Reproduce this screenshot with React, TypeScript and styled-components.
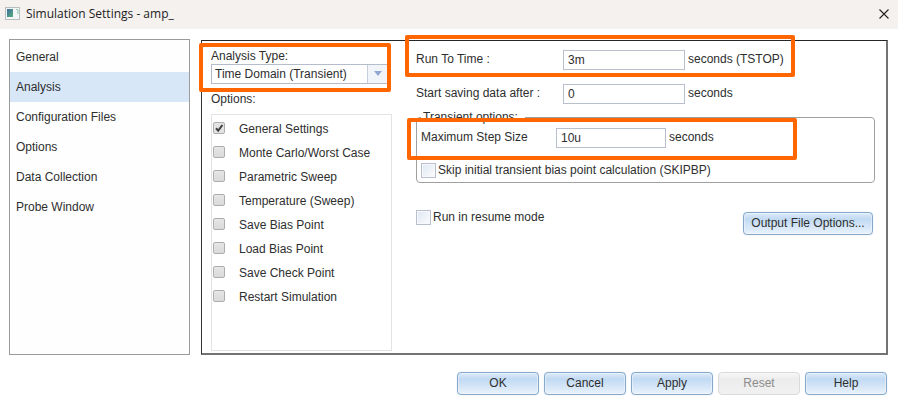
import React, { useState } from "react";
import styled, { createGlobalStyle, css } from "styled-components";

const GlobalStyle = createGlobalStyle`
  * { box-sizing: border-box; }
  body {
    margin: 0;
    background: #fff;
    color: #2e2e2e;
    font: 12px/16px "Liberation Sans", Arial, sans-serif;
  }
  button, input, select { font: inherit; color: inherit; margin: 0; }
`;

const Window = styled.div`
  display: flex;
  flex-direction: column;
  min-height: 100vh;
`;

const TitleBar = styled.header`
  display: flex;
  align-items: center;
  gap: 6px;
  height: 29px;
  padding: 0 8px 2px 5px;
  background: #f5f1ee;
`;

const Title = styled.h1`
  flex: 1;
  margin: 0;
  font: 12px/16px "Open Sans", "Noto Sans", sans-serif;
  color: #1c1c1c;
`;

const CloseButton = styled.button`
  display: flex;
  padding: 0;
  border: 0;
  background: none;
`;

const Main = styled.main`
  flex: 1;
  display: flex;
  gap: 11px;
  padding: 10px 10px 0 9px;
`;

const Sidebar = styled.nav`
  flex: none;
  width: 181px;
  padding: 2px 0;
  border: 1px solid #9b9b9b;
  background: #fefefe;
`;

const NavLink = styled.a<{ $active: boolean }>`
  display: block;
  padding: 0 6px;
  line-height: 30px;
  color: inherit;
  text-decoration: none;
  background: ${(p) => (p.$active ? "#d8e7f8" : "transparent")};
`;

const Panel = styled.section`
  flex: 1;
  display: flex;
  gap: 24px;
  margin-top: 1px;
  padding: 0 11px 2px 9px;
  border: solid;
  border-width: 1px 2px 2px 1px;
  border-color: #262626 #737373 #737373 #333;
`;

const TypeColumn = styled.div`
  flex: none;
  display: flex;
  flex-direction: column;
  gap: 7px;
  width: 181px;
  padding-top: 7px;
`;

const SettingsColumn = styled.div`
  flex: 1;
  padding-top: 9px;
`;

const TypeField = styled.div`
  position: relative;
  padding-right: 4px;
  label { display: block; }
`;

const SelectBox = styled.div`
  position: relative;
  display: flex;
`;

const Select = styled.select`
  flex: 1;
  height: 20px;
  padding: 0 20px 1px 3px;
  appearance: none;
  border: 1px solid #b5bccb;
  border-radius: 0;
  background: linear-gradient(to left, #f1f4f8 19px, #c6cedb 19px, #c6cedb 20px, #fff 20px);
`;

const Arrow = styled.svg`
  position: absolute;
  right: 6px;
  top: 7px;
  pointer-events: none;
`;

const OptionList = styled.ul`
  flex: 1;
  margin: 0;
  padding: 1px;
  list-style: none;
  border: 1px solid #e3e3e3;
`;

const OptionLabel = styled.label`
  display: flex;
  align-items: center;
  gap: 14px;
  height: 24px;
`;

const OptionText = styled.span`
  padding-top: 1px;
`;

const OptionCheck = styled.input`
  width: 12px;
  height: 12px;
  appearance: none;
  border: 1px solid #adadad;
  border-radius: 2px;
  background: linear-gradient(#e6e6e6, #dadada);
  &:checked {
    background: url("data:image/svg+xml,%3Csvg xmlns='http://www.w3.org/2000/svg' viewBox='0 0 10 10'%3E%3Cpath d='M2 5.2l2.2 2.4L8.4 2' fill='none' stroke='%23404040' stroke-width='2'/%3E%3C/svg%3E") center / 10px no-repeat, #e3e3e3;
  }
`;

const FieldRow = styled.div<{ $labelWidth: number }>`
  position: relative;
  display: flex;
  label { width: ${(p) => p.$labelWidth}px; line-height: 18px; }
`;

const FieldStack = styled.div`
  display: flex;
  flex-direction: column;
  gap: 14px;
`;

const TextInput = styled.input<{ $width: number }>`
  width: ${(p) => p.$width}px;
  height: 20px;
  padding: 0 4px;
  border: 1px solid #b9bfcd;
  border-radius: 0;
  background: #fff;
`;

const Unit = styled.span`
  margin-left: 3px;
  line-height: 18px;
`;

const Group = styled.fieldset`
  min-width: 0;
  margin: 5px 0 0;
  padding: 3px 4px 4px;
  border: 1px solid #a0a0a0;
  border-radius: 4px;
`;

const GroupTitle = styled.legend`
  margin-left: 0;
  padding: 0 7px 0 2px;
`;

const CheckLabel = styled.label<{ $spaced?: boolean }>`
  display: flex;
  gap: 2px;
  line-height: 14px;
  ${(p) => p.$spaced && css`margin-top: 15px;`}
`;

const Check = styled.input`
  width: 15px;
  height: 15px;
  appearance: none;
  border: 1px solid #b9bfcc;
  background: linear-gradient(135deg, #dfe8f2, #fbfcfe);
  box-shadow: inset 0 0 0 1px #f7f9fc;
  &:checked { background: #7c9cc9; }
`;

const ResumeRow = styled.div`
  display: flex;
  align-items: flex-start;
  justify-content: space-between;
  margin-top: 27px;
  padding-right: 2px;
`;

const Button = styled.button<{ $width: number }>`
  width: ${(p) => p.$width}px;
  height: 23px;
  padding: 0 0 1px;
  border: 1px solid #86a9cb;
  border-radius: 4px;
  background: linear-gradient(#dceaf9, #c1daf3 30%, #e9f2fc);
  box-shadow: inset 0 0 0 1px rgba(255, 255, 255, 0.4), 0 0 1px #a9c3dd;
  ${ResumeRow} & { margin-top: 2px; }
  &:disabled {
    color: #8c8c8c;
    border-color: #dadada;
    background: linear-gradient(#f8f8f8, #ececec 30%, #f1f1f1);
    box-shadow: none;
  }
`;

const Footer = styled.footer`
  display: flex;
  justify-content: flex-end;
  gap: 5px;
  padding: 17px 11px 7px;
`;

const mark = css`
  position: absolute;
  border: 4px solid #ff6600;
  border-radius: 2px;
  pointer-events: none;
`;
const TypeMark = styled.div`${mark} inset: -5px 1px -8px -12px;`;
const TimeMark = styled.div`${mark} inset: -15px auto -7px -11px; width: 390px;`;
const StepMark = styled.div`${mark} inset: -10px auto -12px -14px; width: 390px;`;

const pages = ["General", "Analysis", "Configuration Files", "Options", "Data Collection", "Probe Window"];
const options = [
  "General Settings",
  "Monte Carlo/Worst Case",
  "Parametric Sweep",
  "Temperature (Sweep)",
  "Save Bias Point",
  "Load Bias Point",
  "Save Check Point",
  "Restart Simulation",
];

export default function App() {
  const [page, setPage] = useState("Analysis");
  return (
    <Window>
      <GlobalStyle />
      <TitleBar>
        <svg width="15" height="13" viewBox="0 0 15 13" aria-hidden="true">
          <defs>
            <linearGradient id="pane" x1="0" y1="0" x2="1" y2="1">
              <stop offset="0" stopColor="#3f6e9c" />
              <stop offset="1" stopColor="#58ad7c" />
            </linearGradient>
          </defs>
          <rect x="0.5" y="0.5" width="14" height="12" fill="#f4f7f7" stroke="#b7bfc0" />
          <rect x="2" y="2" width="6" height="8" fill="url(#pane)" />
          <path d="M11 2.5h2M13 3v4" stroke="#8fc4ad" fill="none" />
        </svg>
        <Title>Simulation Settings - amp_</Title>
        <CloseButton aria-label="Close">
          <svg width="12" height="12" viewBox="0 0 12 12">
            <path d="M1.5 1.5l9 9M10.5 1.5l-9 9" stroke="#222" strokeWidth="1.1" />
          </svg>
        </CloseButton>
      </TitleBar>
      <Main>
        <Sidebar>
          {pages.map((name) => (
            <NavLink key={name} href="#" $active={name === page} onClick={() => setPage(name)}>
              {name}
            </NavLink>
          ))}
        </Sidebar>
        <Panel>
          <TypeColumn>
            <TypeField>
              <label htmlFor="type">Analysis Type:</label>
              <SelectBox>
                <Select id="type">
                  <option>Time Domain (Transient)</option>
                </Select>
                <Arrow width="8" height="5" viewBox="0 0 8 5">
                  <path d="M0 0h8L4 5z" fill="#8fa9d0" />
                </Arrow>
              </SelectBox>
              <TypeMark />
            </TypeField>
            <span id="options">Options:</span>
            <OptionList aria-labelledby="options">
              {options.map((name, i) => (
                <li key={name}>
                  <OptionLabel>
                    <OptionCheck type="checkbox" defaultChecked={i === 0} />
                    <OptionText>{name}</OptionText>
                  </OptionLabel>
                </li>
              ))}
            </OptionList>
          </TypeColumn>
          <SettingsColumn>
            <FieldStack>
              <FieldRow $labelWidth={147}>
                <label htmlFor="run">Run To Time :</label>
                <TextInput id="run" $width={122} defaultValue="3m" />
                <Unit>seconds (TSTOP)</Unit>
                <TimeMark />
              </FieldRow>
              <FieldRow $labelWidth={147}>
                <label htmlFor="start">Start saving data after :</label>
                <TextInput id="start" $width={122} defaultValue="0" />
                <Unit>seconds</Unit>
              </FieldRow>
            </FieldStack>
            <Group>
              <GroupTitle>Transient options:</GroupTitle>
              <FieldRow $labelWidth={135}>
                <label htmlFor="step">Maximum Step Size</label>
                <TextInput id="step" $width={110} defaultValue="10u" />
                <Unit>seconds</Unit>
                <StepMark />
              </FieldRow>
              <CheckLabel $spaced>
                <Check type="checkbox" />
                Skip initial transient bias point calculation (SKIPBP)
              </CheckLabel>
            </Group>
            <ResumeRow>
              <CheckLabel>
                <Check type="checkbox" />
                Run in resume mode
              </CheckLabel>
              <Button $width={130}>Output File Options...</Button>
            </ResumeRow>
          </SettingsColumn>
        </Panel>
      </Main>
      <Footer>
        <Button $width={82}>OK</Button>
        <Button $width={82}>Cancel</Button>
        <Button $width={82}>Apply</Button>
        <Button $width={82} disabled>Reset</Button>
        <Button $width={82}>Help</Button>
      </Footer>
    </Window>
  );
}
